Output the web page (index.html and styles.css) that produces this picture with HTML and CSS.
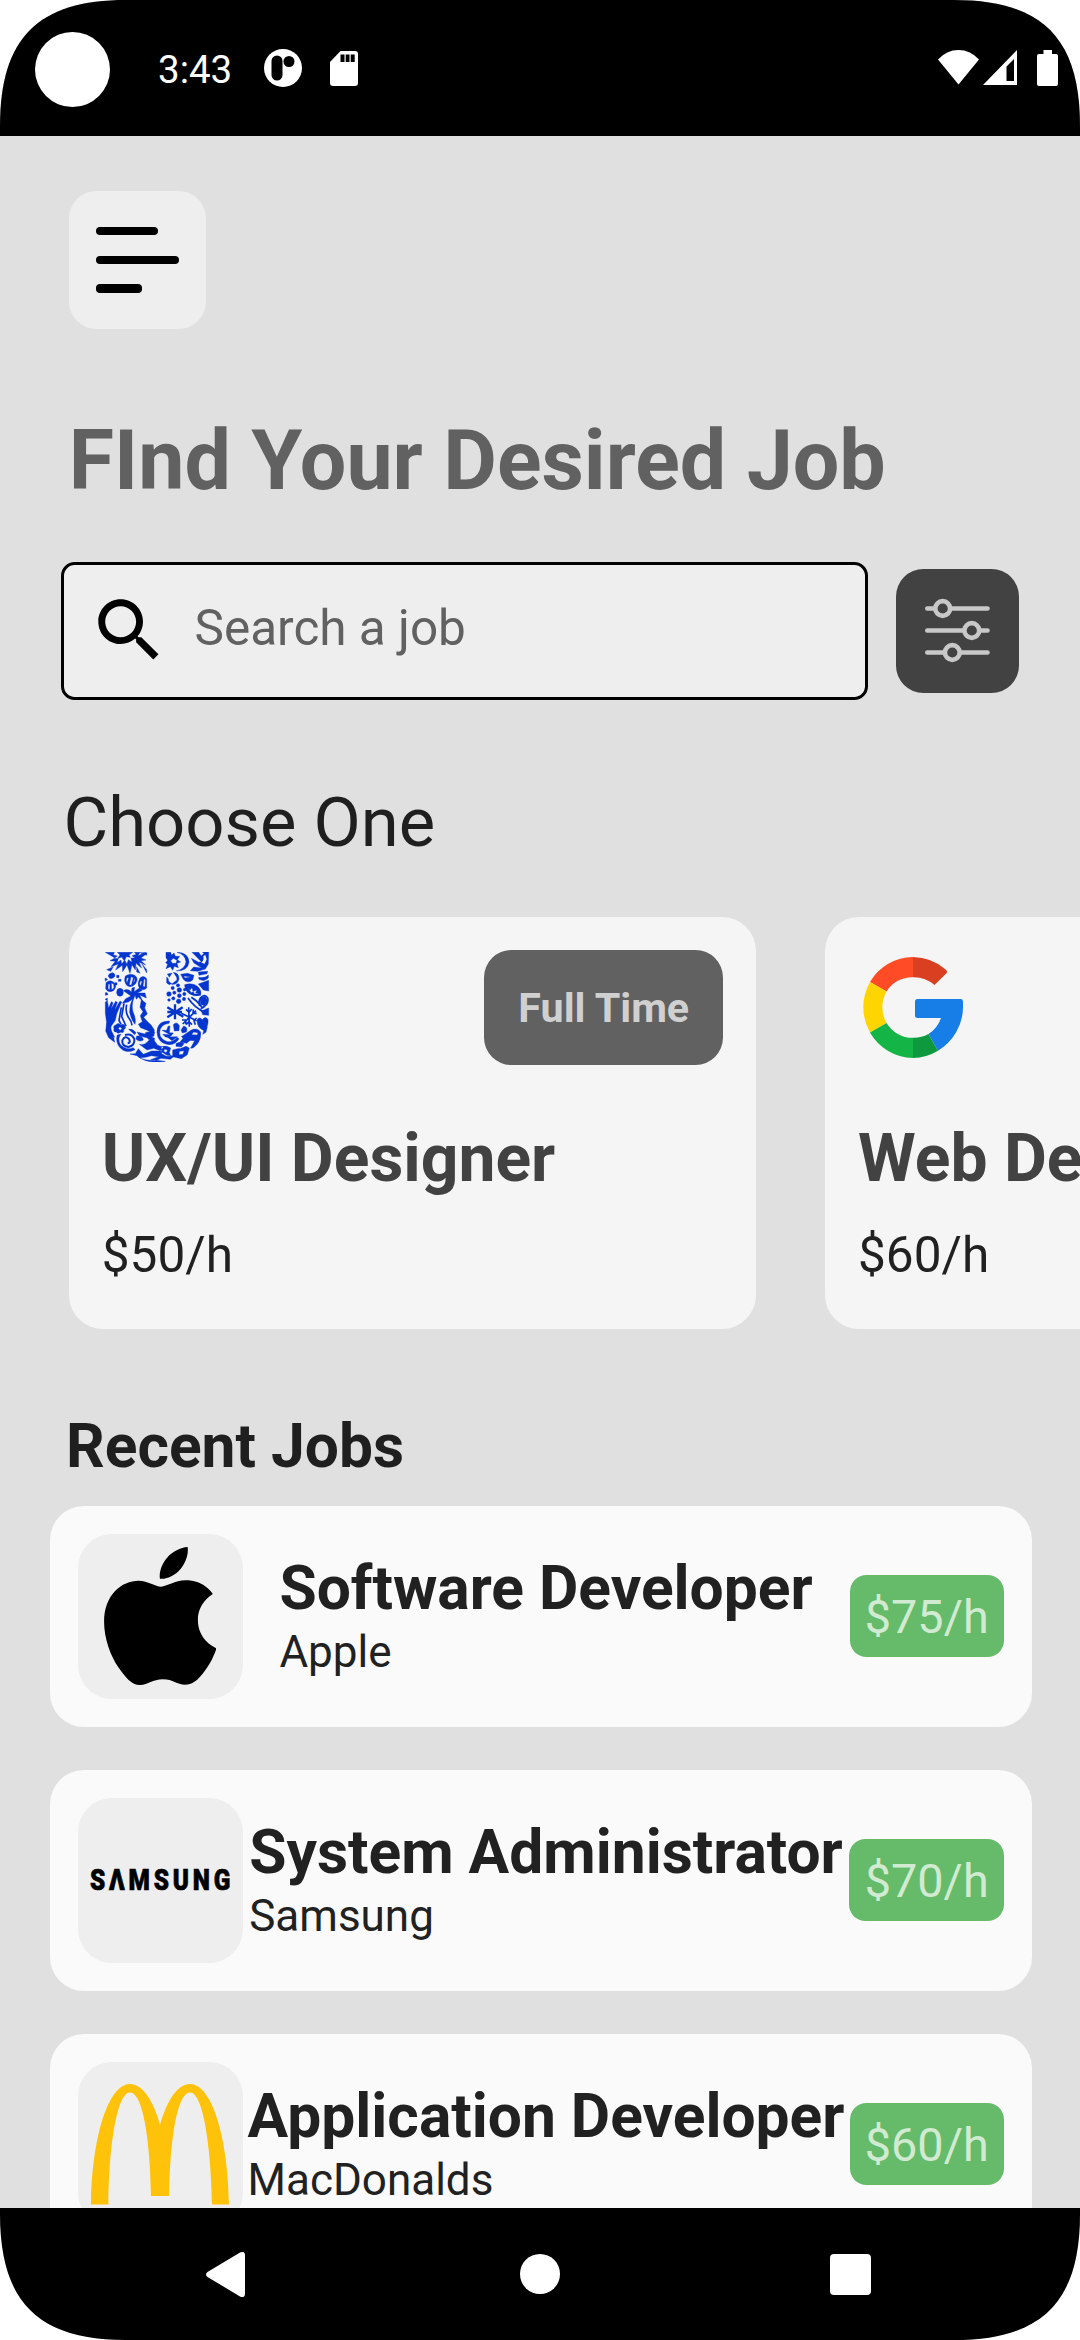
FILE: index.html
```html
<!DOCTYPE html>
<html lang="en">
<head>
<meta charset="utf-8">
<title>Find Your Desired Job</title>
<link rel="stylesheet" href="styles.css">
</head>
<body>
<div class="screen">
  <header class="status">
    <span class="camera"></span>
    <span class="clock">3:43</span>
    <svg class="st-app" viewBox="0 0 38 38"><circle cx="19" cy="19" r="19" fill="#fff"/><rect x="7.500" y="6.500" width="11" height="25" rx="5.500"/><circle cx="25" cy="12.500" r="5.500"/></svg>
    <svg class="st-sd" viewBox="0 0 28 35"><path fill="#fff" d="M10.500 0H25a3 3 0 0 1 3 3v29a3 3 0 0 1-3 3H3a3 3 0 0 1-3-3V11z"/><path d="M10.500 3.500h4v7.500h-4zM15.700 3.500h3.800v7.500h-3.800zM20.700 3.500h4v7.500h-4z"/></svg>
    <svg class="st-wifi" viewBox="0 0 41 35"><path fill="#fff" d="M20.500 34.500 0 9.500Q8.500 0 20.500 0T41 9.500z"/></svg>
    <svg class="st-cell" viewBox="0 0 34 35"><path fill="#fff" fill-rule="evenodd" d="M34 0v35H0zM31 9l-7.500 7.500V31H31z"/></svg>
    <svg class="st-batt" viewBox="0 0 21 36"><path fill="#fff" d="M6.500 0h8.500v4h4a2 2 0 0 1 2 2v28a2 2 0 0 1-2 2H2a2 2 0 0 1-2-2V6a2 2 0 0 1 2-2h4.500z"/></svg>
  </header>

  <main class="content">
    <button class="menu" aria-label="Menu"><span class="bar bar-mid"></span><span class="bar bar-long"></span><span class="bar bar-short"></span></button>

    <h1 class="headline">FInd Your Desired Job</h1>

    <div class="search-row">
      <div class="search">
        <svg class="search-icon" viewBox="0 0 24 24"><path d="M15.500 14h-.79l-.28-.27C15.410 12.590 16 11.110 16 9.500 16 5.910 13.090 3 9.500 3S3 5.910 3 9.500 5.910 16 9.500 16c1.610 0 3.090-.59 4.230-1.570l.27.28v.79l5 4.990L20.490 19l-4.990-5zm-6 0C7.010 14 5 11.990 5 9.500S7.010 5 9.500 5 14 7.010 14 9.500 11.990 14 9.500 14z"/></svg>
        <span class="placeholder">Search a job</span>
      </div>
      <button class="filter" aria-label="Filter">
        <svg class="filter-icon" viewBox="0 0 65 65" fill="none" stroke="#c8c8c8" stroke-width="4.600" stroke-linecap="round"><path d="M2.300 10.500H9M27 10.500h35.500M2.300 32.500h35M56 32.500h6.500M2.300 54.500h16M36 54.500h26.500"/><circle cx="17.700" cy="10.500" r="7.400"/><circle cx="46.800" cy="32.500" r="7.400"/><circle cx="27.300" cy="54.500" r="7.400"/></svg>
      </button>
    </div>

    <h2 class="choose">Choose One</h2>

    <div class="cards">
      <article class="card">
        <div class="card-top">
          <svg class="logo-u" viewBox="72 68 318 330" fill="#0435cf" stroke="#0435cf" stroke-width="1.200">
            <!-- sun -->
            <path d="M76 69h27l-3 8 12 3-9 7 12 1-4 12 12-8 2 12 9-11 7 11 4-13 11 8-3-13 12 0-9-7 13-4-6-6h17l-6 10 20-9 7 2-18 14 15 6-15 2 14 13-20-8 8 17-17-14-2 20-10-16-6 26-9-25-13 20-1-19-20 14 8-18-22 8 13-16-16-2 15-8z"/>
            <path d="M112 69h46l-11 8 4 7-12-2-6 13-8-12-13 5 8-11z"/>
            <path d="M180 70h20v8zM186 104l14 17v10zM170 112l10 20-10-4zM80 121l20-9-8 14z"/>
            <!-- shells and beans, left stem -->
            <ellipse cx="95" cy="139" rx="10" ry="8" transform="rotate(-25 95 139)"/>
            <path d="M75 146l8 4-7 6zM75 210l7-4v8zM76 190q7-2 8 6l-8 2zM110 138h7v7h-7zM115 150h8v6h-8zM104 160h7v7h-7z"/>
            <path d="M78 160q14-12 26 2 8 12-4 22-16 8-23-6zm7 4-1 14 5 3 1-16zm9-3 1 20 7-5-1-12z" fill-rule="evenodd"/>
            <ellipse cx="120" cy="189" rx="10" ry="12"/>
            <path d="M136 140q14-10 28-2 14 10 2 26-14 14-26 4-10-12-4-28zm5 5q-5 8 0 16l5-16zm12-3-5 24 6 2 6-23zm10 4-3 15q7-8 3-15z" fill-rule="evenodd"/>
            <path d="M180 146q10-10 20 2v28q-10 10-22 0-8-12 2-30zm2 8q-6 9 0 16l4-14zm10-6-3 23 6 2 1-22z" fill-rule="evenodd"/>
            <!-- palm -->
            <path d="M130 184q14-8 24 4l2-12 8-2-2 13 16-11 9 7-15 8 23 0 4 15-20-9 10 20-14-14-6 7-4-12-6 16q-6 26 4 44 5 14 2 27-12-14-16-36-1-20 8-39l-12 8-18 4 10-14 16-8z"/>
            <!-- hand -->
            <path d="M76 218l6-4 4 22 8-19 5 3-6 19 14-23 5 3-8 23 16-27 5 3-15 36-4 19-12 17q-6 12-1 25l7 4 4 20-18-14-9-20 3-24-4-30z"/>
            <!-- sprays -->
            <g fill="none" stroke-width="5"><path d="M124 234l-7 39 6 12M132 222l-7 40 13 28M140 226q-5 22 5 38 10 12 11 24"/></g>
            <path d="M184 211l14 11-4 14 8 18-11 10 9 10 14 14 9 14-1 18-18 6-25-6-8-12 24 6 17-7-30-12-7-10 12-8-6-18 8-12-9-13z"/>
            <!-- flower and spiral -->
            <path d="M108 286q8-8 14 1 10-6 14 4 2 8-5 10 2 11-10 8-7 6-12-1-10 0-7-10-4-9 6-12zm12 6-5 5 5 6 6-5z" fill-rule="evenodd"/>
            <path d="M146 300q10-4 22 10l-4 6zM170 320q18-2 20 12-12 8-22-3z"/>
            <path d="M111 318l12-4q-12 16-1 33 18 17 38 8l5 6q-28 14-46-7-12-14-8-36z"/>
            <path d="M135 317q20-6 28 12 2 20-18 24-20-2-18-20 8-16 20-4 6 12-4 13" fill="none" stroke-width="6"/>
            <!-- waves along the bottom -->
            <path d="M178 345q16 4 26-9 8-10 17-5l12 17 18 6-10 10-20-7-20 5zM150 374l16-1 9-15 15 17 25-10 26 0 20 13 22 2-12 10-28-3-16 7-26-2q-20-2-30-13zM180 385q18 0 34-6l22 3-24 9 44 5q-50 8-76-11zM244 352q14-5 28 4l-4 14 5 11-14 0-14-8zm10 7-3 7 7 4 5-7z" fill-rule="evenodd"/>
            <path d="M196 310l21-6 7 6-9 13 9 4-2 8-17-5z"/>
            <!-- face -->
            <path d="M269 275q-38-1-38 34 2 34 37 37 20-1 29-18l-6-4q-12 16-28 13-24-6-24-28 2-24 28-27z"/>
            <path d="M246 303l14 0 4-12 6-1-2 20 12 1-7 9q-14 10-25-5l22 1zM280 286q10-12 18 3l-1 15-14 1zM262 323l30-1-16 12z"/>
            <!-- birds and moon, right stem -->
            <path d="M258 69h14l3 9 7-7 4 10 13 0-7 10 10 7-11 4 4 13-12-4-5 12-7-11-13 6 5-13-6-5 6-7-5-8zm22 18-8 7 5 8 11 0 3-9z" fill-rule="evenodd"/>
            <path d="M291 69q35 1 36 30-3 26-38 26 27-7 29-28-3-22-27-28z"/>
            <path d="M336 69h20l8 11 8-8-5-4h19l-1 36-9 15-23 7-22-2 10-11 24 3-23-15-8-14 22 12 8-2z"/>
            <path d="M370 80l6-3 4 13-6 13-10-3q9-7 6-20z" fill="#f5f5f5" stroke="none"/>
            <path d="M262 134l14-3-8 13zM280 129q18 2 17 20-4 18-22 16l9-8q11-5 5-15zM260 143l5 5q-1 11 11 14l-8 4-8-5z"/>
            <path d="M302 135l20-3 20 6-4 14q-16 12-28-2zm9 5 4 6 17-3z" fill-rule="evenodd"/>
            <path d="M355 128l28-2-2 7-24 5zM356 144q20 3 29-7v9q-11 12-28 4zM386 153v32l-16-3-15-18z"/>
            <!-- grapes -->
            <circle cx="278" cy="176" r="5"/><circle cx="294" cy="168" r="5"/><circle cx="267" cy="194" r="7"/><circle cx="283" cy="190" r="5"/><circle cx="298" cy="182" r="7"/><circle cx="314" cy="181" r="4"/><circle cx="280" cy="207" r="5"/><circle cx="298" cy="199" r="6"/><circle cx="313" cy="194" r="5"/><circle cx="296" cy="216" r="7"/><circle cx="312" cy="209" r="5"/><circle cx="267" cy="212" r="4"/>
            <!-- leaf -->
            <path d="M314 166q24-7 40 6 12 12 8 26-18 5-34-5-14-10-14-27zm10 6 4 12 8-9 3 11 12-4-4 8 10 3-14 1-3-7-7 3z" fill-rule="evenodd"/>
            <path d="M324 206q20 30 52 44M334 204q20 12 32 30M362 238q26-12 21-32-6-10-14-6-16 8-10 30" fill="none" stroke-width="5"/>
            <path d="M360 206l16-5 7 14-10 14-12-4zM364 245l22-9v22l-18-2z"/>
            <!-- snowflakes -->
            <g fill="none" stroke-width="7"><path d="M285 225v45M262 234l48 28M262 264l46-30M262 248h44"/><path d="M326 234l2 58M304 252l46 22M308 284l40-40M318 240l9 9 8-10M340 240l-1 12 11 0M350 266l-8 8 4 12M318 286l9-9 9 9M306 272l12 0-1 13" stroke-width="5"/></g>
            <!-- heart, fish, spoon -->
            <path d="M352 270q8-9 15 1 10-13 17 0 2 21-12 33-24-10-20-34zM311 290q14 4 8 18l-12 3-4-9zM334 302q18-8 28 6 2 20-10 36-14 16-20 12l12-22-28-2-12-10zm6 6-5 8 17 1 2-7z" fill-rule="evenodd"/>
            <path d="M310 326l24 4-14 12-20-4zM288 343q13-8 24 0l-8 10-16-2zM278 362q18-6 22-4l18-7 10 5-6 20-18 12-26-6zm20 4-1 10 12-1 3-11z" fill-rule="evenodd"/>
            <path d="M80 282l9 2 6 22 9 18-14-7-9-20zM374 296l8-4-4 17-10 6z"/>
          </svg>
          <span class="chip">Full Time</span>
        </div>
        <h3 class="card-title">UX/UI Designer</h3>
        <p class="card-pay">$50/h</p>
      </article>

      <article class="card">
        <div class="card-top">
          <svg class="logo-g" viewBox="0 0 100 101">
            <path fill="#ff4c26" d="M7 25A50.400 50.400 0 0 1 50 0v20.200A30.500 30.500 0 0 0 23.500 34.500z"/>
            <path fill="#d93f21" d="M50 0a51 51 0 0 1 33 12.700q2 2 .2 3.800L71.500 28A31 31 0 0 0 50 20.200z"/>
            <path fill="#ffd500" d="M7 25a51 51 0 0 0 0 50.500l16.500-9.500a32 32 0 0 1 0-31.500z"/>
            <path fill="#14b447" d="M7 75.500A50.400 50.400 0 0 0 50 101V80.800A30.500 30.500 0 0 1 23.500 66z"/>
            <path fill="#0f993e" d="M50 101a51 51 0 0 0 25-7.300L65.500 77A30.500 30.500 0 0 1 50 80.800z"/>
            <path fill="#167ee6" d="M54.500 42H98q2 0 2 2.500v6A51 51 0 0 1 75 93.700L65.500 77A30.500 30.500 0 0 0 78 61H54.500q-2.500 0-2.500-2.500v-14Q52 42 54.500 42z"/>
          </svg>
        </div>
        <h3 class="card-title">Web Developer</h3>
        <p class="card-pay">$60/h</p>
      </article>
    </div>

    <h2 class="recent">Recent Jobs</h2>

    <section class="jobs">
      <article class="job">
        <div class="tile"><svg class="logo-apple" viewBox="0 0 814 1000"><path d="M788.100 340.900c-5.800 4.500-108.200 62.200-108.200 190.500 0 148.400 130.300 200.900 134.200 202.200-.6 3.200-20.700 71.900-68.700 141.900-42.800 61.600-87.500 123.100-155.500 123.100s-85.500-39.500-164-39.500c-76.500 0-103.700 40.800-165.900 40.800s-105.600-57-155.500-127C46.700 790.700 0 663 0 541.800c0-194.400 126.400-297.500 250.800-297.500 66.100 0 121.200 43.400 162.700 43.400 39.500 0 101.100-46 176.300-46 28.500 0 130.900 2.600 198.300 99.200zm-234-181.500c31.100-36.900 53.100-88.100 53.100-139.300 0-7.100-.6-14.300-1.900-20.100-50.600 1.900-110.800 33.700-147.100 75.800-28.500 32.400-55.100 83.600-55.100 135.500 0 7.800 1.300 15.600 1.900 18.100 3.200.6 8.400 1.300 13.600 1.300 45.400 0 102.500-30.400 135.500-71.300z"/></svg></div>
        <div class="job-text"><h3 class="job-title">Software Developer</h3><p class="job-company">Apple</p></div>
        <span class="pay">$75/h</span>
      </article>
      <article class="job">
        <div class="tile"><svg class="logo-samsung" viewBox="0 0 140 24" aria-label="Samsung"><text class="wordmark" x="0" y="22" transform="scale(.84 1)" textLength="167" lengthAdjust="spacing">SΛMSUNG</text></svg></div>
        <div class="job-text"><h3 class="job-title">System Administrator</h3><p class="job-company">Samsung</p></div>
        <span class="pay">$70/h</span>
      </article>
      <article class="job">
        <div class="tile"><svg class="logo-mcd" viewBox="0 0 138 121"><path fill="#ffc20a" d="M0 120.500C1 54 17 0 39 0 53 0 63 20 69 40.500 75 20 85 0 99 0c22 0 38 54 39 120.500H121C120 62 112 8.500 99 8.500S79 56 78 112H60C59 56 52 8.500 39 8.500S18 62 17.500 120.500z"/></svg></div>
        <div class="job-text"><h3 class="job-title">Application Developer</h3><p class="job-company">MacDonalds</p></div>
        <span class="pay">$60/h</span>
      </article>
    </section>
  </main>

  <nav class="navbar">
    <svg class="nav-back" viewBox="0 0 39 45"><path fill="#fff" d="M1.500 20 34 .6Q39-1.500 39 3.500v38q0 5-5 2.900L1.500 25q-3-2.500 0-5z"/></svg>
    <span class="nav-home"></span>
    <span class="nav-recent"></span>
  </nav>
</div>
</body>
</html>
```
FILE: styles.css
```css
* { box-sizing: border-box; }
body { margin: 0; background: #fff; font-family: Roboto, sans-serif; color: #212121; overflow: hidden; }
h1, h2, h3, p { margin: 0; }
button { border: 0; padding: 0; }
svg { display: block; flex: none; }

.screen {
  width: 1080px; height: 2340px; display: flex; flex-direction: column;
  background: #e0e0e0; overflow: hidden;
  clip-path: path("M0 126C0 38 38 0 126 0H954C1042 0 1080 38 1080 126V2214C1080 2302 1042 2340 954 2340H126C38 2340 0 2302 0 2214Z");
}

/* status bar */
.status { flex: none; height: 136px; display: flex; align-items: flex-start; background: #000; padding: 0 22px 0 35px; color: #fff; }
.camera { width: 75px; height: 75px; margin-top: 32px; border-radius: 50%; background: #fff; }
.clock { width: 76px; margin: 47px 0 0 48px; font-size: 38.5px; line-height: 45px; }
.st-app { width: 38px; height: 38px; margin: 49px 0 0 30px; }
.st-sd { width: 28px; height: 35px; margin: 51px 0 0 27.500px; }
.st-wifi { width: 41px; height: 35px; margin: 50px 0 0 auto; }
.st-cell { width: 34px; height: 35px; margin: 50px 0 0 4px; }
.st-batt { width: 21px; height: 36px; margin: 50px 0 0 20px; }

/* page */
.content { flex: 1; min-height: 0; overflow: hidden; display: flex; flex-direction: column; padding-top: 55px; }
.menu { flex: none; width: 137.500px; height: 137.500px; margin-left: 68.750px; border-radius: 27.500px; background: #eee; display: flex; flex-direction: column; align-items: flex-start; gap: 20.700px; padding: 36px 27px; }
.bar { height: 8.300px; border-radius: 4px; background: #000; }
.bar-mid { width: 62px; }
.bar-long { width: 83px; }
.bar-short { width: 46px; }
.headline { flex: none; margin: 83px 0 0 68.750px; font-size: 82.500px; line-height: 97px; font-weight: 700; color: #616161; white-space: nowrap; }

.search-row { flex: none; display: flex; align-items: center; gap: 27.500px; margin: 53.500px 0 0 60.500px; }
.search { width: 807.500px; height: 137.500px; border: 3px solid #000; border-radius: 13.750px; background: #eee; display: flex; align-items: center; padding-left: 24.500px; }
.search-icon { width: 82.500px; height: 82.500px; margin-top: -1px; }
.placeholder { margin: -5px 0 0 24px; font-size: 49.500px; line-height: 58px; color: #616161; }
.filter { width: 123.750px; height: 123.750px; border-radius: 27.500px; background: #424242; display: flex; align-items: center; justify-content: center; }
.filter-icon { width: 65px; height: 65px; }

.choose { flex: none; margin: 82px 0 0 63.500px; font-size: 68.750px; line-height: 81px; font-weight: 400; color: #1f1f1f; }

.cards { flex: none; display: flex; gap: 68.750px; margin-top: 54px; padding-left: 68.750px; }
.card { flex: none; width: 687.500px; height: 412.500px; padding: 33px; border-radius: 34px; background: #f5f5f5; }
.card-top { display: flex; justify-content: space-between; align-items: center; height: 115.500px; }
.logo-u { width: 106px; height: 110px; margin-left: 2px; }
.logo-g { width: 100px; height: 101px; margin-left: 5px; }
.chip { width: 239px; height: 115.500px; border-radius: 27.500px; background: #616161; color: #d0d0d0; font-size: 41.250px; line-height: 117px; font-weight: 700; text-align: center; }
.card-title { margin-top: 55px; font-size: 66px; line-height: 77px; font-weight: 700; color: #424242; white-space: nowrap; }
.card-pay { margin-top: 29px; font-size: 49.500px; line-height: 58px; }

.recent { flex: none; margin: 82px 0 0 66px; font-size: 60.500px; line-height: 71px; font-weight: 700; color: #1f1f1f; }

/* job list */
.jobs { flex: none; display: flex; flex-direction: column; gap: 43px; margin: 23.500px 48px 0 49.500px; }
.job { flex: none; height: 221px; padding: 0 28px; border-radius: 34px; background: #fafafa; display: flex; align-items: center; justify-content: space-between; }
.tile { flex: none; width: 165px; height: 165px; border-radius: 34px; background: #eee; display: flex; align-items: center; justify-content: center; }
.logo-apple { width: 112.500px; height: 138px; }
.logo-samsung { width: 140px; height: 24px; overflow: visible; }
.wordmark { font: 900 29px Roboto, sans-serif; fill: #000; stroke: #000; stroke-width: .7px; }
.logo-mcd { width: 138px; height: 121px; }
.job-text { display: flex; flex-direction: column; gap: 2px; margin-top: -2px; }
.job-title { font-size: 60.500px; line-height: 71px; font-weight: 700; white-space: nowrap; }
.job-company { font-size: 44px; line-height: 52px; }
.pay { flex: none; width: 154.500px; height: 82.500px; border-radius: 16.500px; background: #66bb6a; color: #d1ebd2; font-size: 46.750px; line-height: 84px; text-align: center; }

/* system navigation */
.navbar { flex: none; height: 132px; display: flex; align-items: center; padding-left: 206px; background: #000; }
.nav-back { width: 39px; height: 45px; }
.nav-home { width: 40px; height: 40px; margin-left: 275px; border-radius: 50%; background: #fff; }
.nav-recent { width: 41px; height: 41px; margin-left: 270px; border-radius: 4px; background: #fff; }
```
